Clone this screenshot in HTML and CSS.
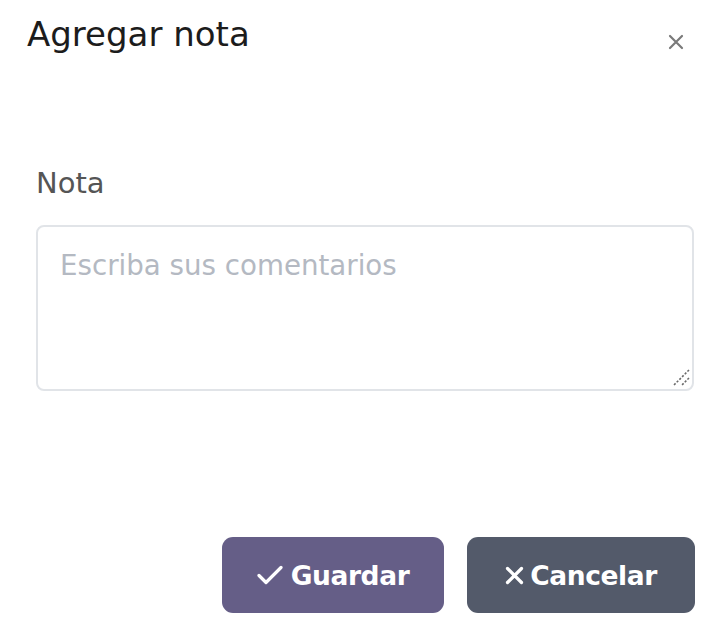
FILE: index.html
```html
<!DOCTYPE html>
<html lang="es">
<head>
<meta charset="utf-8">
<title>Agregar nota</title>
<link rel="stylesheet" href="styles.css">
</head>
<body>
<div class="modal">
  <div class="modal-header">
    <h1 class="modal-title">Agregar nota</h1>
    <button class="btn-close" aria-label="Cerrar">
      <svg width="16" height="16" viewBox="0 0 16 16"><path d="M2 2L14 14M14 2L2 14" stroke="#7a7a7a" stroke-width="2.2" stroke-linecap="round"/></svg>
    </button>
  </div>
  <div class="modal-body">
    <label class="form-label" for="nota">Nota</label>
    <div class="field">
      <textarea id="nota" class="form-control" placeholder="Escriba sus comentarios"></textarea>
      <svg class="grip" width="20" height="20" viewBox="0 0 20 20"><path d="M18 2L2 18M18 10L10 18" stroke="#6b6b6b" stroke-width="1.6" stroke-dasharray="2.2 1.6"/></svg>
    </div>
  </div>
  <div class="modal-footer">
    <button class="btn btn-primary">
      <svg width="26" height="22" viewBox="0 0 26 22"><path d="M2 11.5L9 18.5L24 3.5" fill="none" stroke="#fff" stroke-width="3.2" stroke-linecap="round" stroke-linejoin="round"/></svg>
      <span>Guardar</span>
    </button>
    <button class="btn btn-secondary">
      <svg width="19" height="19" viewBox="0 0 19 19"><path d="M2.5 2.5L16.5 16.5M16.5 2.5L2.5 16.5" stroke="#fff" stroke-width="3.2" stroke-linecap="round"/></svg>
      <span>Cancelar</span>
    </button>
  </div>
</div>
</body>
</html>
```
FILE: styles.css
```css
html, body {
  margin: 0;
  padding: 0;
  background: #ffffff;
}
body {
  font-family: "DejaVu Sans", "Noto Sans", sans-serif;
  color: #212529;
}
.modal {
  width: 722px;
  height: 633px;
  display: flex;
  flex-direction: column;
}
.modal-header {
  display: flex;
  justify-content: space-between;
  align-items: flex-start;
  padding: 14px 38px 0 27px;
  height: 151px;
  box-sizing: border-box;
}
.modal-title {
  margin: 0;
  font-size: 34px;
  line-height: 40px;
  font-weight: normal;
  color: #1c1c1c;
}
.btn-close {
  border: 0;
  background: transparent;
  padding: 0;
  margin-top: 20px;
  width: 16px;
  height: 16px;
  display: flex;
}
.modal-body {
  display: flex;
  flex-direction: column;
  padding: 0 28px 0 36px;
}
.form-label {
  font-size: 29px;
  line-height: 36px;
  color: #555555;
  margin: 14px 0 24px 0;
}
.field {
  position: relative;
  width: 658px;
  height: 166px;
}
.form-control {
  display: block;
  box-sizing: border-box;
  width: 658px;
  height: 166px;
  border: 2px solid #e1e4e8;
  border-radius: 8px;
  padding: 18px 22px;
  font-family: inherit;
  font-size: 27.7px;
  line-height: 42px;
  color: #212529;
  resize: none;
  outline: none;
}
.form-control::placeholder {
  color: #b4b9c2;
}
.grip {
  position: absolute;
  right: 3px;
  bottom: 3px;
}
.modal-footer {
  display: flex;
  justify-content: flex-end;
  gap: 23px;
  padding: 146px 27px 0 0;
}
.btn {
  height: 76px;
  border: 0;
  border-radius: 11px;
  display: flex;
  align-items: center;
  justify-content: center;
  gap: 8px;
  color: #ffffff;
  font-family: inherit;
  font-size: 26.5px;
  font-weight: bold;
  letter-spacing: -0.4px;
  padding: 0 20px;
}
.btn-primary {
  background: #655e87;
  width: 222px;
}
.btn-secondary {
  background: #535a6a;
  width: 228px;
  gap: 6px;
}
```
